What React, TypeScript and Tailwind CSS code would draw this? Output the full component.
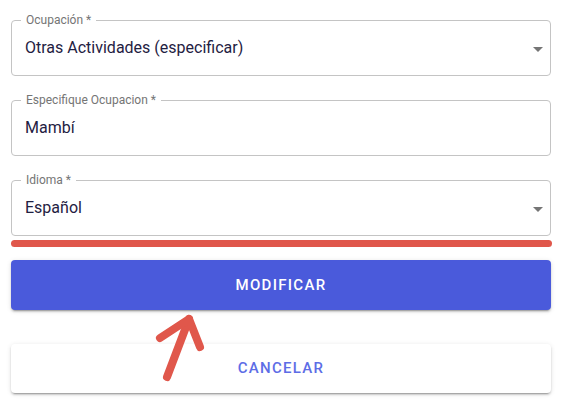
import React from "react";

function Field({
  label,
  value,
  select,
}: {
  label: string;
  value: string;
  select?: boolean;
}) {
  return (
    <div className="relative h-[56px] w-[540px] rounded-[4px] border border-[#c4c4c4] bg-white">
      <span className="absolute left-[9px] top-[-9px] bg-white px-[5px] text-[12px] leading-[16px] text-[#757575]">
        {label} *
      </span>
      <div className="flex h-full items-center justify-between pl-[13px] pr-0">
        <span className="text-[16px] text-[#1f2142]">{value}</span>
        {select && (
          <svg width="24" height="24" viewBox="0 0 24 24" className="mt-[1px]">
            <path d="M7 10l5 5 5-5z" fill="#757575" />
          </svg>
        )}
      </div>
    </div>
  );
}

export default function App() {
  return (
    <div
      className="relative h-[410px] w-[567px] bg-white pl-[11px] pt-[20px]"
      style={{ fontFamily: "Roboto, 'Liberation Sans', sans-serif" }}
    >
      <div className="flex flex-col gap-[24px]">
        <Field label="Ocupación" value="Otras Actividades (especificar)" select />
        <Field label="Especifique Ocupacion" value="Mambí" />
        <Field label="Idioma" value="Español" select />
      </div>

      <div className="mt-[4px] h-[7px] w-[541px] rounded-full bg-[#e0574b]" />

      <button className="mt-[13px] flex h-[50px] w-[540px] items-center justify-center rounded-[4px] bg-[#4a5adb] text-[15px] font-medium tracking-[1.3px] text-white shadow-[0_3px_1px_-2px_rgba(0,0,0,0.2),0_2px_2px_0_rgba(0,0,0,0.14),0_1px_5px_0_rgba(0,0,0,0.12)]">
        MODIFICAR
      </button>

      <button className="mt-[34px] flex h-[49px] w-[540px] items-center justify-center rounded-[4px] bg-white text-[15px] font-medium tracking-[1.3px] text-[#5d6de6] shadow-[0_3px_1px_-2px_rgba(0,0,0,0.2),0_2px_2px_0_rgba(0,0,0,0.14),0_1px_5px_0_rgba(0,0,0,0.12)]">
        CANCELAR
      </button>

      <svg
        className="pointer-events-none absolute left-0 top-0"
        width="567"
        height="410"
        viewBox="0 0 567 410"
      >
        <g
          stroke="#e0574b"
          strokeWidth="8"
          strokeLinecap="round"
          strokeLinejoin="round"
          fill="none"
        >
          <path d="M167 377 L189 319" />
          <path d="M160 338 L189 319 L200 347" />
        </g>
      </svg>
    </div>
  );
}
